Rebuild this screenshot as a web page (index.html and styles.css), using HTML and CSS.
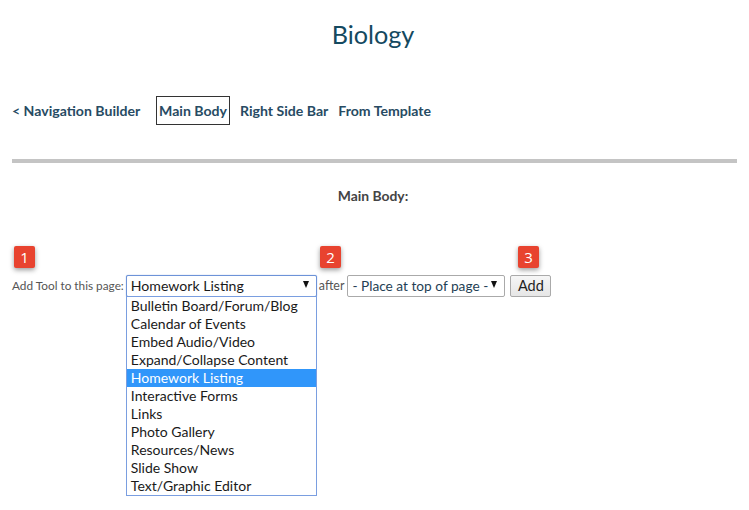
FILE: index.html
```html
<!DOCTYPE html>
<html lang="en">
<head>
<meta charset="utf-8">
<title>Biology</title>
<link rel="stylesheet" href="styles.css">
</head>
<body>
<h1 class="title">Biology</h1>
<nav class="nav">
  <a class="nav-link nav-back">&lt; Navigation Builder</a>
  <a class="nav-link nav-active">Main Body</a>
  <a class="nav-link">Right Side Bar</a>
  <a class="nav-link">From Template</a>
</nav>
<hr class="rule">
<h2 class="section">Main Body:</h2>
<div class="badges">
  <span class="badge badge-1">1</span>
  <span class="badge badge-2">2</span>
  <span class="badge badge-3">3</span>
</div>
<div class="form">
  <span class="label">Add Tool to this page:</span>
  <div class="picker">
    <div class="select select-open"><span>Homework Listing</span><span class="arrow"></span></div>
    <ul class="menu">
      <li>Bulletin Board/Forum/Blog</li>
      <li>Calendar of Events</li>
      <li>Embed Audio/Video</li>
      <li>Expand/Collapse Content</li>
      <li class="selected">Homework Listing</li>
      <li>Interactive Forms</li>
      <li>Links</li>
      <li>Photo Gallery</li>
      <li>Resources/News</li>
      <li>Slide Show</li>
      <li>Text/Graphic Editor</li>
    </ul>
  </div>
  <span class="label label-after">after</span>
  <div class="select select-place"><span>- Place at top of page -</span><span class="arrow"></span></div>
  <button class="add" type="button">Add</button>
</div>
</body>
</html>
```
FILE: styles.css
```css
* { box-sizing: border-box; }
html, body { margin: 0; padding: 0; }
body {
  width: 749px;
  height: 510px;
  overflow: hidden;
  background: #fff;
  font-family: Lato, "Open Sans", sans-serif;
  color: #333;
}
.title {
  margin: 0;
  padding: 17px 3px 0 0;
  height: 96px;
  font-size: 25.2px;
  line-height: 34px;
  font-weight: 400;
  text-align: center;
  color: #14495f;
}
.nav {
  display: flex;
  align-items: center;
  height: 29px;
  padding-left: 12px;
  font-size: 14.1px;
  font-weight: 700;
  color: #274b63;
}
.nav-link { display: block; margin-right: 10px; white-space: nowrap; }
.nav-back { width: 128px; margin-right: 16px; }
.nav-active {
  border: 1px solid #333;
  height: 29px;
  width: 74px;
  line-height: 27px;
  text-align: center;
}
.rule {
  margin: 34px 12px 0 12px;
  border: 0;
  height: 4px;
  background: #c4c4c4;
}
.section {
  margin: 25px 0 0 0;
  padding-right: 3px;
  height: 16px;
  font-size: 13.9px;
  line-height: 16px;
  font-weight: 700;
  text-align: center;
  color: #444;
}
.badges {
  display: flex;
  margin-top: 42px;
  padding-left: 14px;
}
.badge {
  display: block;
  width: 21px;
  height: 22px;
  border-radius: 2px;
  background: #e8432f;
  color: #fff;
  font-family: "Open Sans", sans-serif;
  font-size: 15px;
  line-height: 22px;
  text-align: center;
  box-shadow: 0 2px 5px rgba(0, 0, 0, 0.4);
}
.badge-2 { margin-left: 285px; }
.badge-3 { margin-left: 177px; }
.form {
  display: flex;
  align-items: flex-start;
  margin-top: 7px;
  padding-left: 12px;
}
.label {
  font-size: 11.8px;
  line-height: 22px;
  color: #555;
  white-space: nowrap;
}
.picker {
  position: relative;
  width: 191px;
  margin-left: 2px;
}
.select {
  display: flex;
  align-items: center;
  justify-content: space-between;
  height: 22px;
  padding: 0 7px 2px 4px;
  border: 1px solid #aaa;
  border-radius: 2px;
  background: #fff;
  font-size: 14.1px;
  color: #1a1a1a;
  white-space: nowrap;
}
.select-open { border-color: #6d93d8; box-shadow: 0 0 1px #6d93d8; }
.select-place {
  width: 158px;
  margin-left: 3px;
  padding-left: 4px;
  font-size: 13.7px;
  color: #1f3f55;
}
.arrow {
  width: 0;
  height: 0;
  margin-bottom: 2px;
  border-left: 3.5px solid transparent;
  border-right: 3.5px solid transparent;
  border-top: 7px solid #111;
}
.label-after { margin-left: 2px; font-size: 12.4px; }
.menu {
  position: absolute;
  top: 21px;
  left: 0;
  width: 191px;
  margin: 0;
  padding: 0;
  list-style: none;
  border: 1px solid #7a9ee0;
  background: #fff;
  font-size: 14px;
  line-height: 18px;
  color: #1a1a1a;
}
.menu li { height: 18px; padding-left: 4px; white-space: nowrap; }
.menu .selected { background: #3096fa; color: #fff; }
.add {
  width: 41px;
  height: 22px;
  margin-left: 5px;
  padding: 0;
  border: 1px solid #aaa;
  border-radius: 2px;
  background: linear-gradient(#f6f6f6, #e6e6e6);
  font-family: inherit;
  font-size: 14.5px;
  line-height: 20px;
  color: #222;
}
```
